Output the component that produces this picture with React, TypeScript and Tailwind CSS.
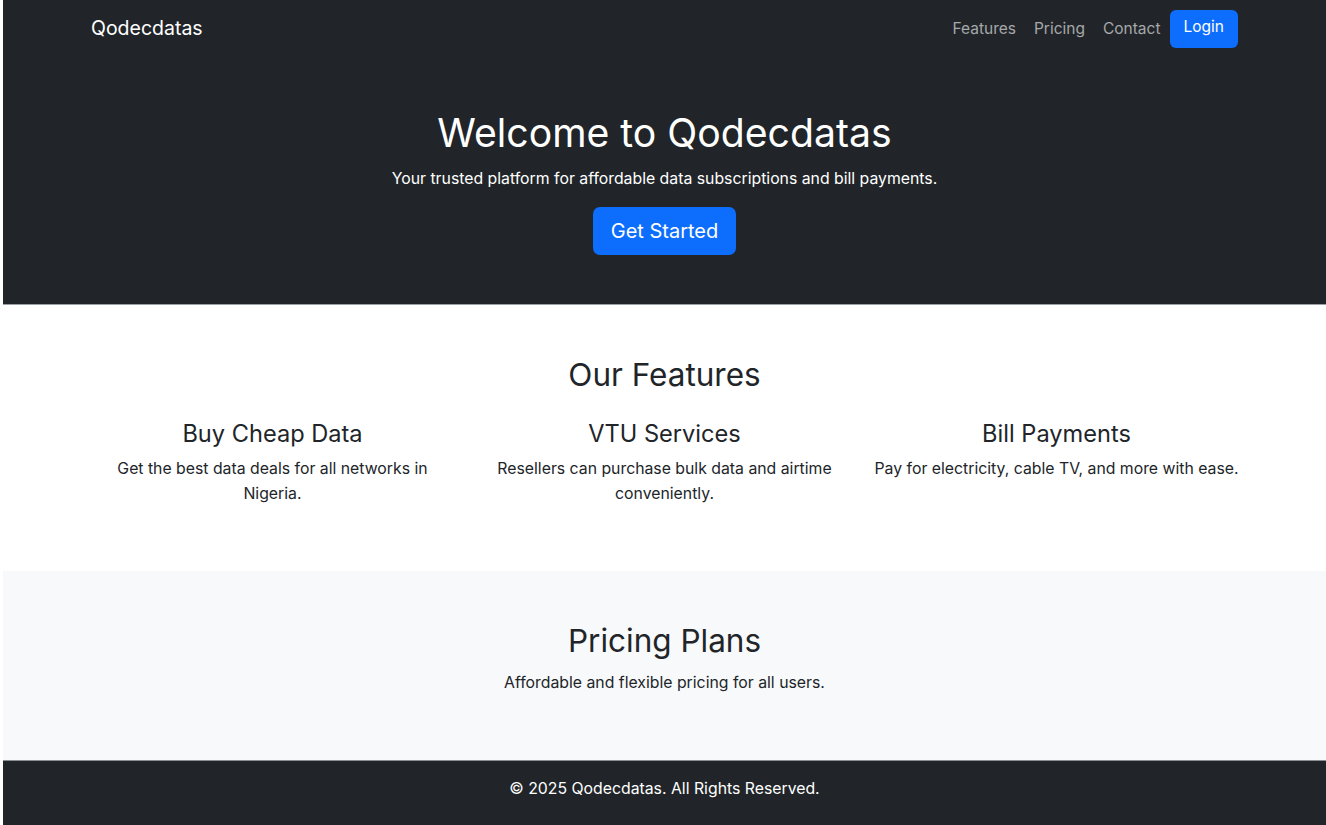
import React from "react";

export default function App() {
  return (
    <div className="min-h-screen bg-white pl-[3px]" style={{ fontFamily: "Inter, 'Noto Sans', sans-serif" }}>
      <div className="bg-[#212529]">
        <nav className="flex h-[56px] items-center justify-between pl-[88px] pr-[88px] pt-[1px]">
          <span className="text-[19.5px] text-white">Qodecdatas</span>
          <div className="flex items-center text-[15.5px] text-[#a6a8aa]">
            <a className="px-[9px]">Features</a>
            <a className="px-[9px]">Pricing</a>
            <a className="px-[9px]">Contact</a>
            <button className="h-[38px] rounded-[6px] bg-[#0d6efd] px-[14px] pb-[3px] text-[15.5px] text-white">Login</button>
          </div>
        </nav>
        <header className="flex flex-col items-center pb-[49px] pt-[53px] text-center text-white">
          <h1 className="text-[39.2px] leading-[48px]">Welcome to Qodecdatas</h1>
          <p className="mt-[10px] text-[15.8px] leading-[24px]">Your trusted platform for affordable data subscriptions and bill payments.</p>
          <button className="mt-[16px] h-[48px] rounded-[7px] bg-[#0d6efd] px-[18px] text-[20px] text-white">Get Started</button>
        </header>
      </div>
      <div className="h-[1px] bg-[#9aa0a6]" />
      <section className="flex flex-col items-center pb-[65px] pt-[51px] text-[#212529]">
        <h2 className="text-[31.5px] leading-[38px]">Our Features</h2>
        <div className="mt-[25px] grid w-[1176px] grid-cols-3">
          {[
            ["Buy Cheap Data", "Get the best data deals for all networks in Nigeria."],
            ["VTU Services", "Resellers can purchase bulk data and airtime conveniently."],
            ["Bill Payments", "Pay for electricity, cable TV, and more with ease."],
          ].map(([t, d]) => (
            <div key={t} className="px-[12px] text-center">
              <h3 className="text-[23.6px] leading-[29px]">{t}</h3>
              <p className="mt-[8px] text-[15.8px] leading-[25px]">{d}</p>
            </div>
          ))}
        </div>
      </section>
      <section className="flex flex-col items-center bg-[#f8f9fa] pb-[65px] pt-[51px] text-[#212529]">
        <h2 className="text-[31.5px] leading-[38px]">Pricing Plans</h2>
        <p className="mt-[11px] text-[15.8px] leading-[24px]">Affordable and flexible pricing for all users.</p>
      </section>
      <footer className="border-t border-[#8a8f94] bg-[#212529] pb-[30px] pt-[16px] text-center text-[15.8px] leading-[24px] text-white">
        © 2025 Qodecdatas. All Rights Reserved.
      </footer>
    </div>
  );
}
